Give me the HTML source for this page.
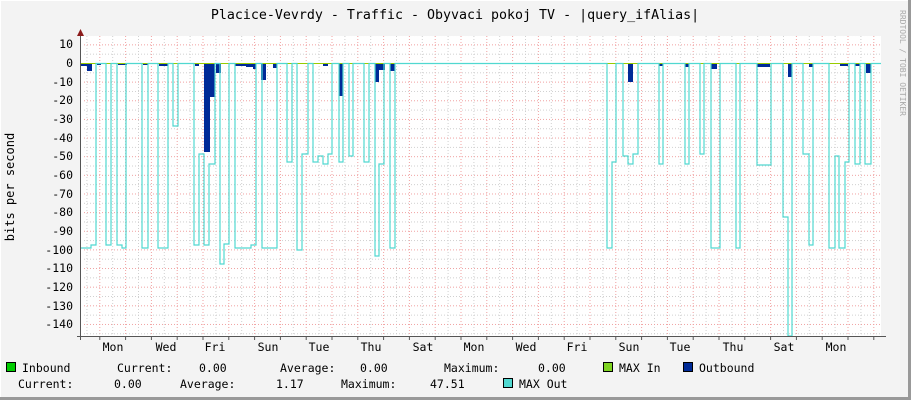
<!DOCTYPE html>
<html><head><meta charset="utf-8"><style>
html,body{margin:0;padding:0;background:#f3f3f3}
svg{display:block}
text{font-family:"DejaVu Sans Mono","Liberation Mono",monospace;fill:#000}
</style></head><body>
<svg width="911" height="400" viewBox="0 0 911 400" xmlns="http://www.w3.org/2000/svg">
<defs>
<pattern id="vg" patternUnits="userSpaceOnUse" x="99.3" y="0" width="25.8" height="400">
<line x1="0.5" y1="0" x2="0.5" y2="400" stroke="#f0a0a0" stroke-dasharray="1,2"/>
<line x1="13.4" y1="0" x2="13.4" y2="400" stroke="#cfcfcf" stroke-dasharray="1,2"/>
</pattern>
<pattern id="hg" patternUnits="userSpaceOnUse" x="0" y="63" width="911" height="18.64">
<line x1="0" y1="0.5" x2="911" y2="0.5" stroke="#f0a0a0" stroke-dasharray="1,2"/>
<line x1="0" y1="9.82" x2="911" y2="9.82" stroke="#cfcfcf" stroke-dasharray="1,2"/>
</pattern>
<pattern id="tk" patternUnits="userSpaceOnUse" x="99.3" y="0" width="25.8" height="400">
<line x1="0.5" y1="336" x2="0.5" y2="340" stroke="#555"/>
</pattern>
</defs>
<rect x="0" y="0" width="911" height="400" fill="#f3f3f3"/>
<line x1="0" y1="0.5" x2="911" y2="0.5" stroke="#fff"/>
<line x1="0.5" y1="0" x2="0.5" y2="400" stroke="#fff"/>
<line x1="0" y1="398.5" x2="911" y2="398.5" stroke="#999" stroke-width="3"/>
<line x1="909.5" y1="0" x2="909.5" y2="400" stroke="#999" stroke-width="3"/>
<rect x="81" y="36" width="800" height="300" fill="#fff"/>
<rect x="82" y="36" width="799" height="300" fill="url(#vg)"/>
<rect x="82" y="36" width="799" height="300" fill="url(#hg)"/>
<rect x="82" y="336" width="800" height="5" fill="url(#tk)"/>
<g fill="#002a97">
<rect x="81" y="63" width="7" height="3"/><rect x="87" y="63" width="5" height="8"/>
<rect x="97" y="63" width="4" height="2"/><rect x="118" y="63" width="9" height="2"/>
<rect x="143" y="63" width="5" height="2"/><rect x="159" y="63" width="9" height="3"/>
<rect x="195" y="63" width="4" height="3"/><rect x="204" y="63" width="6" height="89"/>
<rect x="210" y="63" width="5" height="34"/><rect x="216" y="63" width="5" height="10"/>
<rect x="235" y="63" width="11" height="3"/><rect x="246" y="63" width="7" height="4"/>
<rect x="253" y="63" width="3" height="6"/><rect x="261" y="63" width="5" height="17"/>
<rect x="273" y="63" width="4" height="5"/><rect x="286" y="63" width="5" height="1"/>
<rect x="296" y="63" width="6" height="1"/><rect x="313" y="63" width="4" height="1"/>
<rect x="323" y="63" width="5" height="3"/><rect x="339" y="63" width="4" height="33"/>
<rect x="349" y="63" width="4" height="1"/><rect x="364" y="63" width="5" height="1"/>
<rect x="375" y="63" width="4" height="19"/><rect x="379" y="63" width="6" height="7"/>
<rect x="390" y="63" width="5" height="8"/><rect x="607" y="63" width="9" height="1"/>
<rect x="628" y="63" width="5" height="19"/><rect x="659" y="63" width="4" height="3"/>
<rect x="685" y="63" width="4" height="4"/><rect x="711" y="63" width="6" height="6"/>
<rect x="736" y="63" width="4" height="1"/><rect x="757" y="63" width="13" height="4"/>
<rect x="788" y="63" width="4" height="14"/><rect x="809" y="63" width="4" height="4"/>
<rect x="829" y="63" width="4" height="1"/><rect x="840" y="63" width="8" height="3"/>
<rect x="855" y="63" width="5" height="3"/><rect x="866" y="63" width="5" height="10"/>
</g>
<line x1="81" y1="63.5" x2="881" y2="63.5" stroke="#9c0" stroke-width="1"/>
<path fill="none" stroke="#50d8d0" stroke-width="1.2" d="M81,248 H91 V245 H96 V63.5 H106 V245 H111 V63.5 H117 V245 H122 V248 H126 V63.5 H142 V248 H148 V63.5 H158 V248 H168 V63.5 H173 V126 H178 V63.5 H194 V245 H199 V154 H204 V245 H209 V164 H215 V63.5 H220 V264 H224 V244 H229 V63.5 H235 V248 H251 V245 H256 V63.5 H262 V248 H277 V63.5 H287 V162 H292 V63.5 H297 V250 H302 V154 H308 V63.5 H313 V162 H318 V156 H323 V164 H328 V154 H332 V63.5 H339 V162 H343 V63.5 H349 V156 H353 V63.5 H364 V162 H369 V63.5 H375 V256 H379 V164 H384 V63.5 H390 V248 H395 V63.5 H607 V248 H612 V162 H616 V63.5 H623 V156 H628 V164 H633 V154 H638 V63.5 H659 V164 H663 V63.5 H685 V164 H689 V63.5 H700 V154 H704 V63.5 H711 V248 H720 V63.5 H736 V248 H740 V63.5 H757 V165 H771 V63.5 H783 V217 H788 V336 H792 V63.5 H803 V154 H809 V245 H813 V63.5 H829 V248 H835 V156 H839 V248 H845 V162 H849 V63.5 H855 V164 H860 V63.5 H865 V164 H871 V63.5 H881"/>
<line x1="80.5" y1="33" x2="80.5" y2="340" stroke="#555"/>
<line x1="77" y1="336.5" x2="886" y2="336.5" stroke="#555"/>
<polygon points="77,36 84,36 80.5,29" fill="#8b1a1a"/>
<text x="455" y="19" font-size="13.3" text-anchor="middle">Placice-Vevrdy - Traffic - Obyvaci pokoj TV - |query_ifAlias|</text>
<g font-size="11.5" text-anchor="end">
<text x="73" y="48">10</text><text x="73" y="67">0</text><text x="73" y="86">-10</text>
<text x="73" y="104">-20</text><text x="73" y="123">-30</text><text x="73" y="142">-40</text>
<text x="73" y="160">-50</text><text x="73" y="179">-60</text><text x="73" y="198">-70</text>
<text x="73" y="216">-80</text><text x="73" y="235">-90</text><text x="73" y="254">-100</text>
<text x="73" y="272">-110</text><text x="73" y="291">-120</text><text x="73" y="310">-130</text>
<text x="73" y="328">-140</text>
</g>
<text transform="translate(14,187) rotate(-90)" font-size="12" text-anchor="middle">bits per second</text>
<g font-size="11.5" text-anchor="middle">
<text x="113" y="351">Mon</text><text x="166" y="351">Wed</text><text x="215" y="351">Fri</text>
<text x="268" y="351">Sun</text><text x="319" y="351">Tue</text><text x="371" y="351">Thu</text>
<text x="423" y="351">Sat</text><text x="474" y="351">Mon</text><text x="526" y="351">Wed</text>
<text x="577" y="351">Fri</text><text x="629" y="351">Sun</text><text x="680" y="351">Tue</text>
<text x="733" y="351">Thu</text><text x="784" y="351">Sat</text><text x="836" y="351">Mon</text>
</g>
<text transform="translate(900,10) rotate(90)" font-size="8" style="fill:#aaa">RRDTOOL / TOBI OETIKER</text>
<rect x="6.5" y="362.5" width="9" height="9" fill="#00cc00" stroke="#000"/>
<rect x="603.5" y="362.5" width="9" height="9" fill="#7ed321" stroke="#000"/>
<rect x="683.5" y="362.5" width="9" height="9" fill="#002a97" stroke="#000"/>
<rect x="503.5" y="378.5" width="9" height="9" fill="#50d8d0" stroke="#000"/>
<g font-size="11.5">
<text x="22" y="372">Inbound</text><text x="117" y="372">Current:</text><text x="199" y="372">0.00</text>
<text x="280" y="372">Average:</text><text x="360" y="372">0.00</text>
<text x="444" y="372">Maximum:</text><text x="538" y="372">0.00</text>
<text x="619" y="372">MAX In</text><text x="699" y="372">Outbound</text>
<text x="18" y="388">Current:</text><text x="114" y="388">0.00</text>
<text x="180" y="388">Average:</text><text x="276" y="388">1.17</text>
<text x="341" y="388">Maximum:</text><text x="430" y="388">47.51</text>
<text x="519" y="388">MAX Out</text>
</g>
</svg>
</body></html>
